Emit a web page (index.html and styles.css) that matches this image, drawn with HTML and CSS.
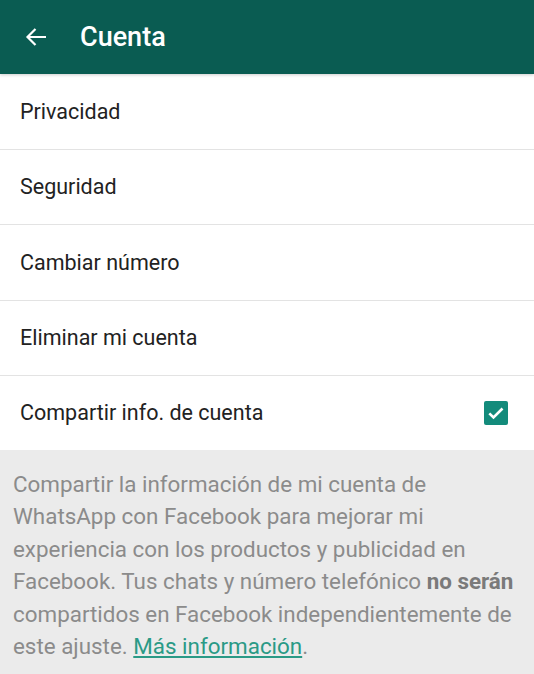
FILE: index.html
```html
<!DOCTYPE html>
<html lang="es">

<head>
    <meta charset="UTF-8">
    <meta name="viewport" content="width=device-width, initial-scale=1.0">
    <title>Cuenta</title>
    <link rel="stylesheet" href="styles.css">
</head>

<body>
    <div class="toolbar">
        <svg class="back" width="24" height="24" viewBox="0 0 24 24">
            <path d="M22 12H3.5M11.5 4l-8 8 8 8" fill="none" stroke="#ffffff" stroke-width="2.2"/>
        </svg>
        <h1>Cuenta</h1>
    </div>

    <div class="settings">
        <div class="setting">Privacidad</div>
        <div class="setting">Seguridad</div>
        <div class="setting">Cambiar número</div>
        <div class="setting">Eliminar mi cuenta</div>
        <div class="setting last">
            <span>Compartir info. de cuenta</span>
            <span class="checkbox">
                <svg width="24" height="24" viewBox="0 0 24 24">
                    <path d="M5.3 12.3l4.2 4.2 9-9" fill="none" stroke="#ffffff" stroke-width="2.6"/>
                </svg>
            </span>
        </div>
    </div>

    <div class="info">
        Compartir la información de mi cuenta de WhatsApp con Facebook para mejorar mi
        experiencia con los productos y publicidad en Facebook. Tus chats y número telefónico
        <b>no serán</b> compartidos en Facebook independientemente de este ajuste.
        <a href="#">Más información</a>.
    </div>
</body>

</html>
```

FILE: styles.css
```css
body {
    font-family: Roboto, 'Noto Sans', sans-serif;
    margin: 0;
    padding: 0;
    background-color: #ffffff;
    color: #222222;
    height: 674px;
    overflow: hidden;
    display: flex;
    flex-direction: column;
}

.toolbar {
    background-color: #0a5c52;
    color: #ffffff;
    height: 74px;
    display: flex;
    align-items: center;
    padding-left: 24px;
    box-sizing: border-box;
    box-shadow: 0 1px 3px rgba(0, 0, 0, 0.2);
    position: relative;
}

.back {
    width: 24px;
    height: 24px;
}

h1 {
    font-size: 27px;
    font-weight: 500;
    margin: 0 0 0 32px;
}

.setting {
    height: 75.5px;
    box-sizing: border-box;
    border-bottom: 1px solid #e3e3e3;
    padding: 0 20px;
    display: flex;
    align-items: center;
    justify-content: space-between;
    font-size: 21.5px;
}

.setting.last {
    border-bottom: none;
    height: 73.5px;
    padding-right: 26px;
}

.checkbox {
    width: 24px;
    height: 24px;
    border-radius: 2px;
    background-color: #138b7b;
    display: flex;
}

.info {
    flex: 1;
    background-color: #ebebeb;
    color: #8b8b8b;
    font-size: 22.4px;
    line-height: 32.6px;
    padding: 18px 12px 0 13px;
}

.info b {
    font-weight: 700;
    color: #7a7a7a;
}

.info a {
    color: #2a9a86;
    text-decoration: underline;
}
```
